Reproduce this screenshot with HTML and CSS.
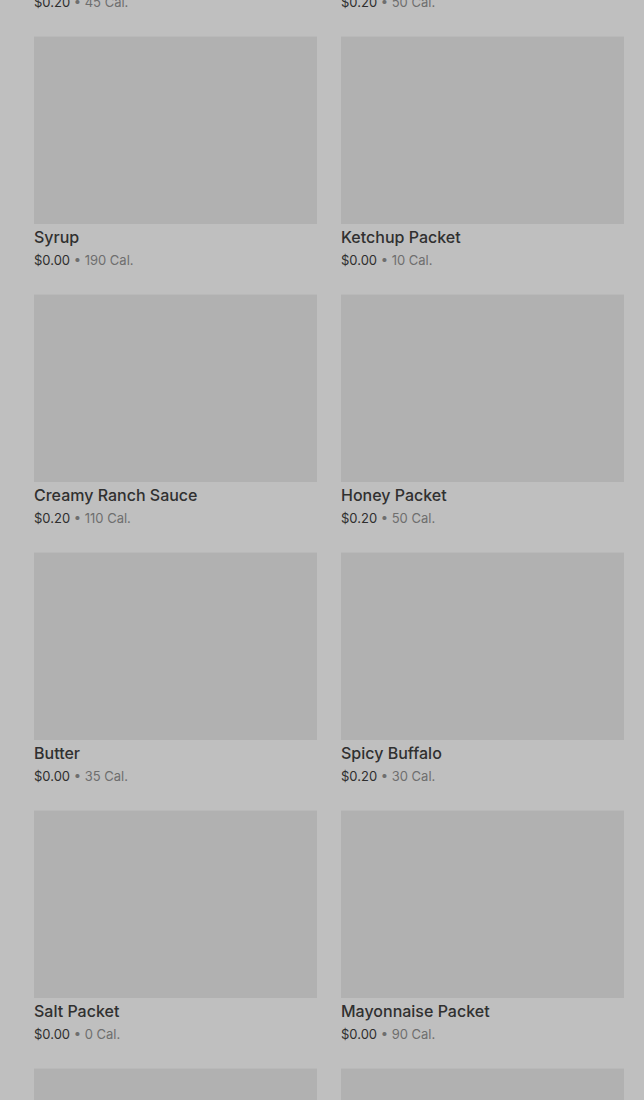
FILE: index.html
```html
<!DOCTYPE html>
<html lang="en">

<head>
    <meta charset="UTF-8">
    <meta name="viewport" content="width=device-width, initial-scale=1.0">
    <title>Sauces &amp; Condiments</title>
    <link rel="stylesheet" href="styles.css">
</head>

<body>
    <div class="menu">
        <div class="item">
            <div class="photo"></div>
            <div class="name">Barbeque Sauce</div>
            <div class="meta"><span class="price">$0.20</span> • 45 Cal.</div>
        </div>
        <div class="item">
            <div class="photo"></div>
            <div class="name">Honey Mustard Sauce</div>
            <div class="meta"><span class="price">$0.20</span> • 50 Cal.</div>
        </div>

        <div class="item">
            <div class="photo"></div>
            <div class="name">Syrup</div>
            <div class="meta"><span class="price">$0.00</span> • 190 Cal.</div>
        </div>
        <div class="item">
            <div class="photo"></div>
            <div class="name">Ketchup Packet</div>
            <div class="meta"><span class="price">$0.00</span> • 10 Cal.</div>
        </div>

        <div class="item">
            <div class="photo"></div>
            <div class="name">Creamy Ranch Sauce</div>
            <div class="meta"><span class="price">$0.20</span> • 110 Cal.</div>
        </div>
        <div class="item">
            <div class="photo"></div>
            <div class="name">Honey Packet</div>
            <div class="meta"><span class="price">$0.20</span> • 50 Cal.</div>
        </div>

        <div class="item">
            <div class="photo"></div>
            <div class="name">Butter</div>
            <div class="meta"><span class="price">$0.00</span> • 35 Cal.</div>
        </div>
        <div class="item">
            <div class="photo"></div>
            <div class="name">Spicy Buffalo</div>
            <div class="meta"><span class="price">$0.20</span> • 30 Cal.</div>
        </div>

        <div class="item">
            <div class="photo"></div>
            <div class="name">Salt Packet</div>
            <div class="meta"><span class="price">$0.00</span> • 0 Cal.</div>
        </div>
        <div class="item">
            <div class="photo"></div>
            <div class="name">Mayonnaise Packet</div>
            <div class="meta"><span class="price">$0.00</span> • 90 Cal.</div>
        </div>

        <div class="item">
            <div class="photo"></div>
            <div class="name">Pepper Packet</div>
            <div class="meta"><span class="price">$0.00</span> • 0 Cal.</div>
        </div>
        <div class="item">
            <div class="photo"></div>
            <div class="name">Sweet 'N Sour Sauce</div>
            <div class="meta"><span class="price">$0.20</span> • 50 Cal.</div>
        </div>
    </div>
</body>

</html>
```

FILE: styles.css
```css
html,
body {
    height: 100%;
}

body {
    font-family: Inter, "Noto Sans", sans-serif;
    margin: 0;
    padding: 0;
    background-color: #bfbfbf;
    overflow: hidden;
}

.menu {
    display: grid;
    grid-template-columns: 283px 283px;
    column-gap: 24px;
    row-gap: 22px;
    padding: 0 20px 0 34px;
    /* la page est deja defilee */
    margin-top: -222px;
}

.photo {
    height: 188px;
    background-color: #b1b1b1;
    border-top: 1px solid #b9b9b9;
    box-sizing: border-box;
}

.name {
    font-size: 16px;
    font-weight: 500;
    line-height: 22px;
    color: #303030;
    margin-top: 2px;
}

.meta {
    font-size: 13px;
    line-height: 24px;
    color: #6e6e6e;
}

.price {
    color: #2e2e2e;
}
```
